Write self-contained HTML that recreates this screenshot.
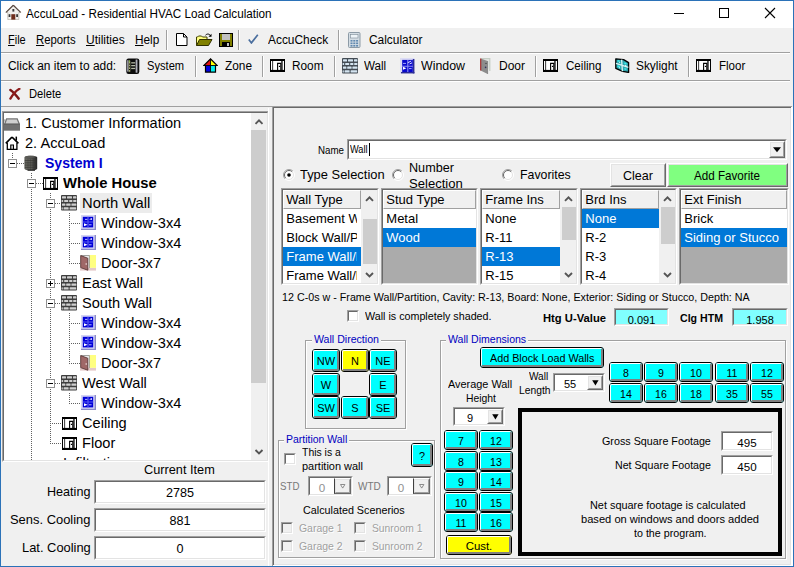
<!DOCTYPE html><html><head><meta charset="utf-8"><title>AccuLoad - Residential HVAC Load Calculation</title><style>
*{box-sizing:border-box;margin:0;padding:0}
html,body{width:794px;height:567px;overflow:hidden;background:#f0f0f0}
body{position:relative;font-family:"Liberation Sans",sans-serif;color:#000}
.a{position:absolute}
.t{position:absolute;white-space:nowrap;line-height:1}
.sep{position:absolute;width:2px;border-left:1px solid #a0a0a0;border-right:1px solid #fff}
.hl{position:absolute;height:2px;border-top:1px solid #a0a0a0;border-bottom:1px solid #fff}
.sunk{position:absolute;border:1px solid;border-color:#a0a0a0 #fff #fff #a0a0a0;background:#fff}
.sunk:before{content:"";position:absolute;left:0;top:0;right:0;bottom:0;border:1px solid;border-color:#696969 #e3e3e3 #e3e3e3 #696969}
.btn{position:absolute;border:1px solid;border-color:#fff #696969 #696969 #fff;background:#f0f0f0;text-align:center}
.btn:before{content:"";position:absolute;left:0;top:0;right:0;bottom:0;border:1px solid;border-color:#e3e3e3 #a0a0a0 #a0a0a0 #e3e3e3}
.cb{position:absolute;border:1px solid #000;border-radius:3px;background:#0ff;text-align:center;font-size:10.6px}
.cb:before{content:"";position:absolute;left:0;top:0;right:0;bottom:0;border-style:solid;border-width:1px 2px 2px 1px;border-color:#fff #808080 #808080 #fff;border-radius:2px}
.cb span{position:relative;z-index:2;display:inline-block}
.gb{position:absolute;border:1px solid #a0a0a0;box-shadow:1px 1px 0 #fff, inset 1px 1px 0 #fff}
.gt{position:absolute;white-space:nowrap;line-height:1;color:#0000c0;background:#f0f0f0}
.chk{position:absolute;width:12px;height:12px;background:#fff;border:1px solid;border-color:#a0a0a0 #fff #fff #a0a0a0}
.chk:before{content:"";position:absolute;left:0;top:0;right:0;bottom:0;border:1px solid;border-color:#696969 #e3e3e3 #e3e3e3 #696969}
.chk.dis{background:#f0f0f0}
.row{position:absolute;white-space:nowrap;line-height:1;font-size:13px}
.sel{background:#0078d7;color:#fff}
.sb{position:absolute;background:#f0f0f0}
.th{position:absolute;background:#cdcdcd}
</style></head><body>
<div class="a" style="left:0px;top:0px;width:794px;height:567px;background:#f0f0f0;border:1px solid #2b72b8"></div>
<div class="a" style="left:1px;top:1px;width:792px;height:27px;background:#fff"></div>
<svg class="a" style="left:5px;top:4px" width="17" height="16" viewBox="0 0 17 16"><path d="M8.3 1L0.8 8.5h2V15.6h11V8.5h2z" fill="#f2f0ec" stroke="#b4aca0" stroke-width="0.7"/><path d="M8.3 1.2L1 8.4M8.3 1.2L15.6 8.4" fill="none" stroke="#5a4a42" stroke-width="1.2"/><rect x="6.3" y="10.2" width="4" height="5.4" fill="#6e2c1a"/><rect x="3.6" y="10.2" width="1.8" height="2.8" fill="#3a3a3a"/><rect x="11.2" y="10.2" width="1.8" height="2.8" fill="#3a3a3a"/><rect x="7.4" y="5" width="1.9" height="2.6" fill="#3a3a3a"/></svg>
<div class="t" style="left:26.4px;top:8px;font-size:12px;transform:scaleX(0.9750);transform-origin:0 0;">AccuLoad - Residential HVAC Load Calculation</div>
<svg class="a" style="left:660px;top:1px" width="131" height="27" viewBox="0 0 131 27"><path d="M14 12.5h10" stroke="#000" stroke-width="1" fill="none"/><rect x="59.5" y="7.5" width="9" height="9" stroke="#000" stroke-width="1" fill="none"/><path d="M105 7l10 10M115 7l-10 10" stroke="#000" stroke-width="1.1" fill="none"/></svg>
<div class="t" style="left:8.3px;top:34px;font-size:12px;transform:scaleX(0.9154);transform-origin:0 0;"><u>F</u>ile</div>
<div class="t" style="left:36px;top:34px;font-size:12px;transform:scaleX(0.9425);transform-origin:0 0;"><u>R</u>eports</div>
<div class="t" style="left:86px;top:34px;font-size:12px;transform:scaleX(1.0007);transform-origin:0 0;"><u>U</u>tilities</div>
<div class="t" style="left:135.3px;top:34px;font-size:12px;transform:scaleX(0.9806);transform-origin:0 0;"><u>H</u>elp</div>
<div class="sep" style="left:166px;top:30px;height:20px"></div>
<div class="sep" style="left:238px;top:30px;height:20px"></div>
<div class="sep" style="left:338px;top:30px;height:20px"></div>
<svg class="a" style="left:176px;top:33px" width="12" height="13" viewBox="0 0 12 13"><path d="M0.5 0.5h7l3.5 3.5v8.5h-10.5z" fill="#fff" stroke="#000"/><path d="M7.5 0.5v3.5h3.5" fill="none" stroke="#000"/></svg>
<svg class="a" style="left:196px;top:33px" width="17" height="13" viewBox="0 0 17 13"><path d="M0.5 12.5v-8.5h1l1-1h3l1 1h4.5v2" fill="#ffff80" stroke="#404000"/><path d="M0.5 12.5l3-6h12.5l-3.5 6z" fill="#808000" stroke="#303000"/><path d="M9.5 2.2c1.5-1.6 3.8-1.6 5 0.6" fill="none" stroke="#000"/><path d="M15.5 0.8v3h-3z" fill="#000"/></svg>
<svg class="a" style="left:219px;top:33px" width="14" height="14" viewBox="0 0 14 14"><rect x="0.5" y="0.5" width="13" height="13" fill="#808000" stroke="#000"/><rect x="3" y="1" width="8" height="6" fill="#c0c0c0"/><rect x="3" y="9" width="8" height="4.5" fill="#000"/><rect x="8" y="10" width="2" height="3" fill="#c0c0c0"/></svg>
<svg class="a" style="left:248px;top:34px" width="11" height="10" viewBox="0 0 11 10"><path d="M0.8 5.5l2.6 3.4L9.8 0.8" fill="none" stroke="#4a6e9e" stroke-width="1.7"/></svg>
<svg class="a" style="left:348px;top:32px" width="13" height="16" viewBox="0 0 13 16"><rect x="0.5" y="0.5" width="11.5" height="15" rx="1" fill="#d4dde4" stroke="#8c9aa6"/><rect x="2.5" y="2.5" width="7.5" height="3.5" fill="#eef4f8" stroke="#7c8a96" stroke-width="0.6"/><g fill="#5f88b0"><rect x="2.5" y="8" width="2" height="1.6"/><rect x="5.3" y="8" width="2" height="1.6"/><rect x="8.1" y="8" width="2" height="1.6"/><rect x="2.5" y="10.5" width="2" height="1.6"/><rect x="5.3" y="10.5" width="2" height="1.6"/><rect x="8.1" y="10.5" width="2" height="1.6"/><rect x="2.5" y="13" width="2" height="1.6"/><rect x="5.3" y="13" width="2" height="1.6"/><rect x="8.1" y="13" width="2" height="1.6"/></g></svg>
<div class="t" style="left:268.2px;top:34px;font-size:12px;transform:scaleX(0.9919);transform-origin:0 0;">AccuCheck</div>
<div class="t" style="left:368.5px;top:34px;font-size:12px;transform:scaleX(0.9904);transform-origin:0 0;">Calculator</div>
<div class="hl" style="left:1px;top:52px;width:789px"></div>
<div class="t" style="left:8.4px;top:60px;font-size:12px;transform:scaleX(0.9944);transform-origin:0 0;">Click an item to add:</div>
<div class="t" style="left:147.4px;top:60px;font-size:12px;transform:scaleX(0.9273);transform-origin:0 0;">System</div>
<div class="t" style="left:225px;top:60px;font-size:12px;transform:scaleX(0.9872);transform-origin:0 0;">Zone</div>
<div class="t" style="left:292.4px;top:60px;font-size:12px;transform:scaleX(0.9841);transform-origin:0 0;">Room</div>
<div class="t" style="left:364.4px;top:60px;font-size:12px;transform:scaleX(0.9699);transform-origin:0 0;">Wall</div>
<div class="t" style="left:421px;top:60px;font-size:12px;transform:scaleX(1.0310);transform-origin:0 0;">Window</div>
<div class="t" style="left:499px;top:60px;font-size:12px;transform:scaleX(0.9997);transform-origin:0 0;">Door</div>
<div class="t" style="left:565.6px;top:60px;font-size:12px;transform:scaleX(0.9650);transform-origin:0 0;">Ceiling</div>
<div class="t" style="left:636px;top:60px;font-size:12px;transform:scaleX(0.9901);transform-origin:0 0;">Skylight</div>
<div class="t" style="left:718.7px;top:60px;font-size:12px;transform:scaleX(0.9620);transform-origin:0 0;">Floor</div>
<svg class="a" style="left:126px;top:58px" width="14" height="16" viewBox="0 0 14 16"><rect x="0.3" y="0.4" width="13" height="15.6" rx="2.2" fill="#0c0c0c"/><rect x="1" y="2.2" width="1.6" height="11.4" fill="#8c8c9c"/><rect x="2.6" y="2.6" width="1.7" height="11.2" fill="#a4aa74"/><rect x="2.9" y="2.4" width="1.1" height="1.4" fill="#7cb040"/><g fill="#101010"><rect x="3" y="5.6" width="1" height="1"/><rect x="3" y="8.3" width="1" height="1"/><rect x="3" y="11" width="1" height="1"/></g><g fill="#b4b8a4"><rect x="5.2" y="4.2" width="4" height="1.3"/><rect x="5.2" y="7" width="4" height="1.3"/><rect x="5.2" y="9.8" width="4" height="1.3"/></g><rect x="9.8" y="1.6" width="1.7" height="13" fill="#a0a0aa"/><rect x="9.8" y="1.6" width="0.6" height="13" fill="#c4c4cc"/></svg>
<svg class="a" style="left:203px;top:58px" width="15" height="15" viewBox="0 0 15 15"><path d="M7.5 0.8L0.8 7.5h6.7z" fill="#e01010"/><path d="M7.5 0.8L14.2 7.5h-6.7z" fill="#ffff00"/><rect x="2.5" y="7.5" width="5" height="6.5" fill="#0000e0"/><rect x="7.5" y="7.5" width="5" height="6.5" fill="#00f0f0"/><path d="M7.5 0.8L0.8 7.5h1.7v6.7h10v-6.7h1.7z" fill="none" stroke="#000" stroke-width="1.2"/><path d="M7.5 1v13M2.5 7.5h10" stroke="#000" stroke-width="0.9"/></svg>
<svg class="a" style="left:270px;top:59px" width="15" height="13" viewBox="0 0 15 13"><rect x="0" y="0" width="15" height="13" fill="#000"/><rect x="1" y="2" width="1.3" height="8.9" fill="#fff"/><rect x="3.1" y="2" width="8.2" height="8.9" fill="#fff"/><rect x="12.6" y="2" width="1.4" height="8.9" fill="#fff"/><path d="M7.6 10.9V4.4h3.2v6.5" fill="none" stroke="#000" stroke-width="1.1"/><path d="M8.9 6.8h1.3v1.2h-1.3z" fill="#000"/></svg>
<svg class="a" style="left:342px;top:58px" width="16" height="16" viewBox="0 0 16 16"><rect x="0" y="0" width="16" height="15.5" rx="1" fill="#444c54"/><rect x="1" y="1.2" width="4" height="2.2" rx="0.5" fill="#d4e4f0"/><rect x="6" y="1.2" width="5" height="2.2" rx="0.5" fill="#d4e4f0"/><rect x="12" y="1.2" width="3.4" height="2.2" rx="0.5" fill="#d4e4f0"/><rect x="0.6" y="4.9" width="1.6" height="2.2" rx="0.5" fill="#d4e4f0"/><rect x="3.2" y="4.9" width="4" height="2.2" rx="0.5" fill="#d4e4f0"/><rect x="8.2" y="4.9" width="3.2" height="2.2" rx="0.5" fill="#d4e4f0"/><rect x="12.2" y="4.9" width="3.2" height="2.2" rx="0.5" fill="#d4e4f0"/><rect x="1" y="8.6" width="3.4" height="2.2" rx="0.5" fill="#d4e4f0"/><rect x="5.2" y="8.6" width="4.4" height="2.2" rx="0.5" fill="#d4e4f0"/><rect x="10.4" y="8.6" width="5" height="2.2" rx="0.5" fill="#d4e4f0"/><rect x="0.6" y="12.2" width="1.2" height="2.2" rx="0.5" fill="#d4e4f0"/><rect x="2.6" y="12.2" width="5" height="2.2" rx="0.5" fill="#d4e4f0"/><rect x="8.6" y="12.2" width="6.6" height="2.2" rx="0.5" fill="#d4e4f0"/></svg>
<svg class="a" style="left:399.6px;top:58.3px" width="15" height="16" viewBox="0 0 15 16"><rect x="0" y="0" width="14.4" height="15.4" fill="#dcdcf4"/><rect x="12.8" y="1" width="1.6" height="14.4" fill="#2c2c94"/><rect x="1" y="14" width="13.4" height="1.4" fill="#2c2c94"/><rect x="2.2" y="1.9" width="10.6" height="12.1" fill="#0808cc"/><path d="M7.8 2v12M2.2 8.2h10.6" stroke="#8c8cf4" stroke-width="1.1"/><path d="M3 8.8l3.4 1.5l-3.4 1.5z" fill="#fff"/><path d="M11.2 3l-3.4 1.7M12 4.8l-2.4 1.2" stroke="#e0e0ff" stroke-width="1"/><path d="M3 5.4h3M9 10.6h2.6" stroke="#b8b8ff" stroke-width="0.9"/></svg>
<svg class="a" style="left:480px;top:58px" width="11" height="16" viewBox="0 0 11 16"><path d="M1.2 0.6h8.6v12.4" fill="#e4e8e4" stroke="#c4ccc4" stroke-width="1.2"/><path d="M0.6 0.6L7.6 3v13L0.6 12.6z" fill="#8c8c8c"/><path d="M7.6 3v13" stroke="#7c7c7c" stroke-width="0.8"/><path d="M0.7 0.6v12" stroke="#a82c2c" stroke-width="1.2"/><circle cx="5.6" cy="9.4" r="0.8" fill="#30305c"/><circle cx="6" cy="5.4" r="0.7" fill="#404040"/></svg>
<svg class="a" style="left:543px;top:59px" width="15" height="13" viewBox="0 0 15 13"><rect x="0" y="0" width="15" height="13" fill="#000"/><rect x="1" y="2" width="1.3" height="8.9" fill="#fff"/><rect x="3.1" y="2" width="8.2" height="8.9" fill="#fff"/><rect x="12.6" y="2" width="1.4" height="8.9" fill="#fff"/><path d="M7.6 10.9V4.4h3.2v6.5" fill="none" stroke="#000" stroke-width="1.1"/><path d="M8.9 6.8h1.3v1.2h-1.3z" fill="#000"/></svg>
<svg class="a" style="left:615px;top:58px" width="15" height="15" viewBox="0 0 15 15"><path d="M0.8 0.8L8.6 1.6L13.6 4.6V14.4L7.6 13.4L0.8 10.4z" fill="#2ea4ac" stroke="#000" stroke-width="1.3" stroke-linejoin="round"/><path d="M6.6 1.6L7.4 13.2M1 5.4L13.4 9.4" stroke="#d8f4f4" stroke-width="1.3"/><path d="M2.6 2.8l2 .5M9.4 5l2 1M2.6 8l2.2 1M9.4 10.6l2 .8" stroke="#40f0f0" stroke-width="1.4"/><path d="M4 4.2l1.2 .4M10 7.4l1.6 .6M4 9.6l1 .4" stroke="#e8ffff" stroke-width="0.9"/></svg>
<svg class="a" style="left:696px;top:59px" width="15" height="13" viewBox="0 0 15 13"><rect x="0" y="0" width="15" height="13" fill="#000"/><rect x="1" y="2" width="1.3" height="8.9" fill="#fff"/><rect x="3.1" y="2" width="8.2" height="8.9" fill="#fff"/><rect x="12.6" y="2" width="1.4" height="8.9" fill="#fff"/><path d="M7.6 10.9V4.4h3.2v6.5" fill="none" stroke="#000" stroke-width="1.1"/><path d="M8.9 6.8h1.3v1.2h-1.3z" fill="#000"/></svg>
<div class="sep" style="left:195px;top:56px;height:21px"></div>
<div class="sep" style="left:262px;top:56px;height:21px"></div>
<div class="sep" style="left:334px;top:56px;height:21px"></div>
<div class="sep" style="left:535px;top:56px;height:21px"></div>
<div class="sep" style="left:688px;top:56px;height:21px"></div>
<div class="hl" style="left:1px;top:80px;width:789px"></div>
<svg class="a" style="left:9px;top:88px" width="12" height="12" viewBox="0 0 12 12"><path d="M1.4 2c2.4 1.6 5.2 4.6 8.2 8.6" fill="none" stroke="#7a1616" stroke-width="2.5" stroke-linecap="round"/><path d="M10.4 0.8c-3.4 2-6.4 5.4-9 9.8" fill="none" stroke="#8e1c1c" stroke-width="2.3" stroke-linecap="round"/></svg>
<div class="t" style="left:28.7px;top:87.5px;font-size:12px;transform:scaleX(0.9312);transform-origin:0 0;">Delete</div>
<div class="a" style="left:1px;top:106px;width:271px;height:1px;background:#a0a0a0"></div>
<div class="a" style="left:272px;top:106px;width:520px;height:1px;background:#a0a0a0"></div>
<div class="a" style="left:273px;top:107px;width:518px;height:1px;background:#696969"></div>
<div class="sunk" style="left:2px;top:111px;width:267px;height:351px;"></div>
<div class="a" style="left:4px;top:113px;width:247px;height:347px;overflow:hidden;background:#fff">
<div class="a" style="left:8px;top:40px;width:1px;height:10px;background:repeating-linear-gradient(to bottom,#606060 0,#606060 1px,transparent 1px,transparent 2px)"></div>
<div class="a" style="left:13px;top:50px;width:7px;height:1px;background:repeating-linear-gradient(to right,#606060 0,#606060 1px,transparent 1px,transparent 2px)"></div>
<div class="a" style="left:27px;top:60px;width:1px;height:287px;background:repeating-linear-gradient(to bottom,#606060 0,#606060 1px,transparent 1px,transparent 2px)"></div>
<div class="a" style="left:32px;top:70px;width:7px;height:1px;background:repeating-linear-gradient(to right,#606060 0,#606060 1px,transparent 1px,transparent 2px)"></div>
<div class="a" style="left:46px;top:80px;width:1px;height:251px;background:repeating-linear-gradient(to bottom,#606060 0,#606060 1px,transparent 1px,transparent 2px)"></div>
<div class="a" style="left:51px;top:90px;width:7px;height:1px;background:repeating-linear-gradient(to right,#606060 0,#606060 1px,transparent 1px,transparent 2px)"></div>
<div class="a" style="left:51px;top:170px;width:7px;height:1px;background:repeating-linear-gradient(to right,#606060 0,#606060 1px,transparent 1px,transparent 2px)"></div>
<div class="a" style="left:51px;top:190px;width:7px;height:1px;background:repeating-linear-gradient(to right,#606060 0,#606060 1px,transparent 1px,transparent 2px)"></div>
<div class="a" style="left:51px;top:270px;width:7px;height:1px;background:repeating-linear-gradient(to right,#606060 0,#606060 1px,transparent 1px,transparent 2px)"></div>
<div class="a" style="left:46px;top:310px;width:12px;height:1px;background:repeating-linear-gradient(to right,#606060 0,#606060 1px,transparent 1px,transparent 2px)"></div>
<div class="a" style="left:46px;top:330px;width:12px;height:1px;background:repeating-linear-gradient(to right,#606060 0,#606060 1px,transparent 1px,transparent 2px)"></div>
<div class="a" style="left:65px;top:100px;width:1px;height:51px;background:repeating-linear-gradient(to bottom,#606060 0,#606060 1px,transparent 1px,transparent 2px)"></div>
<div class="a" style="left:65px;top:200px;width:1px;height:51px;background:repeating-linear-gradient(to bottom,#606060 0,#606060 1px,transparent 1px,transparent 2px)"></div>
<div class="a" style="left:65px;top:280px;width:1px;height:11px;background:repeating-linear-gradient(to bottom,#606060 0,#606060 1px,transparent 1px,transparent 2px)"></div>
<div class="a" style="left:65px;top:110px;width:11px;height:1px;background:repeating-linear-gradient(to right,#606060 0,#606060 1px,transparent 1px,transparent 2px)"></div>
<div class="a" style="left:65px;top:130px;width:11px;height:1px;background:repeating-linear-gradient(to right,#606060 0,#606060 1px,transparent 1px,transparent 2px)"></div>
<div class="a" style="left:65px;top:150px;width:11px;height:1px;background:repeating-linear-gradient(to right,#606060 0,#606060 1px,transparent 1px,transparent 2px)"></div>
<div class="a" style="left:65px;top:210px;width:11px;height:1px;background:repeating-linear-gradient(to right,#606060 0,#606060 1px,transparent 1px,transparent 2px)"></div>
<div class="a" style="left:65px;top:230px;width:11px;height:1px;background:repeating-linear-gradient(to right,#606060 0,#606060 1px,transparent 1px,transparent 2px)"></div>
<div class="a" style="left:65px;top:250px;width:11px;height:1px;background:repeating-linear-gradient(to right,#606060 0,#606060 1px,transparent 1px,transparent 2px)"></div>
<div class="a" style="left:65px;top:290px;width:11px;height:1px;background:repeating-linear-gradient(to right,#606060 0,#606060 1px,transparent 1px,transparent 2px)"></div>
<div class="a" style="left:27px;top:350px;width:12px;height:1px;background:repeating-linear-gradient(to right,#606060 0,#606060 1px,transparent 1px,transparent 2px)"></div>
<div class="a" style="left:4px;top:46px;width:9px;height:9px;border:1px solid #919191;background:#fff"><div class="a" style="left:1px;top:3px;width:5px;height:1px;background:#000"></div></div>
<div class="a" style="left:23px;top:66px;width:9px;height:9px;border:1px solid #919191;background:#fff"><div class="a" style="left:1px;top:3px;width:5px;height:1px;background:#000"></div></div>
<div class="a" style="left:42px;top:86px;width:9px;height:9px;border:1px solid #919191;background:#fff"><div class="a" style="left:1px;top:3px;width:5px;height:1px;background:#000"></div></div>
<div class="a" style="left:42px;top:166px;width:9px;height:9px;border:1px solid #919191;background:#fff"><div class="a" style="left:1px;top:3px;width:5px;height:1px;background:#000"></div><div class="a" style="left:3px;top:1px;width:1px;height:5px;background:#000"></div></div>
<div class="a" style="left:42px;top:186px;width:9px;height:9px;border:1px solid #919191;background:#fff"><div class="a" style="left:1px;top:3px;width:5px;height:1px;background:#000"></div></div>
<div class="a" style="left:42px;top:266px;width:9px;height:9px;border:1px solid #919191;background:#fff"><div class="a" style="left:1px;top:3px;width:5px;height:1px;background:#000"></div></div>
<svg class="a" style="left:0px;top:5px" width="16" height="13" viewBox="0 0 16 13"><path d="M2.2 0.3h11.4L16 6v6.4H0V6z" fill="#747474"/><path d="M3 1.4h9.8l1.6 4H1.6z" fill="#cfcfcf"/><path d="M0.4 1.2l1 .2L0.6 4.6z" fill="#747474"/><rect x="0" y="6" width="16" height="6.4" fill="#707070"/><path d="M0 6.2h16" stroke="#5c5c5c" stroke-width="0.8"/></svg>
<svg class="a" style="left:1px;top:23px" width="14" height="14" viewBox="0 0 14 14"><path d="M7 1.2L0.8 7.4M7 1.2L13.4 7.4" fill="none" stroke="#000" stroke-width="1.7"/><path d="M2.3 7v6.3h9.6V7" fill="#fff" stroke="#000" stroke-width="1.3"/><path d="M7 2.6L2.9 6.8h8.2z" fill="#fff"/><path d="M5.8 13.2V9h2.6v4.2" fill="none" stroke="#000" stroke-width="1.2"/><path d="M11.3 0.6v4" stroke="#000" stroke-width="1.5"/></svg>
<svg class="a" style="left:20px;top:42px" width="14" height="17" viewBox="0 0 14 17"><defs><linearGradient id="acg" x1="0" x2="1" y1="0" y2="0"><stop offset="0" stop-color="#62625c"/><stop offset="0.55" stop-color="#4c4c48"/><stop offset="0.8" stop-color="#3a3a38"/><stop offset="1" stop-color="#262626"/></linearGradient></defs><path d="M0.4 2.4c0-2.2 12.8-2.2 12.8 0v11c0 2.6-12.8 2.6-12.8 0z" fill="url(#acg)"/><ellipse cx="6.2" cy="1.8" rx="5" ry="1.1" fill="#5a5a56"/><g stroke="#6c6c64" stroke-width="0.7"><path d="M2.6 3.6v10.6M5.2 3.8v11M7.8 3.8v11"/></g><g stroke="#34342f" stroke-width="0.6"><path d="M0.8 5.5h11M0.8 7.8h11M0.8 10.1h11M0.8 12.4h11"/></g><path d="M3.6 15.2h7.4" stroke="#101010" stroke-width="1"/></svg>
<svg class="a" style="left:39px;top:64px" width="15" height="13" viewBox="0 0 15 13"><rect x="0" y="0" width="15" height="13" fill="#000"/><rect x="1" y="2" width="1.3" height="8.9" fill="#fff"/><rect x="3.1" y="2" width="8.2" height="8.9" fill="#fff"/><rect x="12.6" y="2" width="1.4" height="8.9" fill="#fff"/><path d="M7.6 10.9V4.4h3.2v6.5" fill="none" stroke="#000" stroke-width="1.1"/><path d="M8.9 6.8h1.3v1.2h-1.3z" fill="#000"/></svg>
<svg class="a" style="left:57px;top:82px" width="16" height="16" viewBox="0 0 16 16"><rect x="0" y="0" width="16" height="15.5" rx="1" fill="#3e3e3e"/><rect x="1" y="1.2" width="4" height="2.2" rx="0.5" fill="#cfcfcf"/><rect x="6" y="1.2" width="5" height="2.2" rx="0.5" fill="#cfcfcf"/><rect x="12" y="1.2" width="3.4" height="2.2" rx="0.5" fill="#cfcfcf"/><rect x="0.6" y="4.9" width="1.6" height="2.2" rx="0.5" fill="#cfcfcf"/><rect x="3.2" y="4.9" width="4" height="2.2" rx="0.5" fill="#cfcfcf"/><rect x="8.2" y="4.9" width="3.2" height="2.2" rx="0.5" fill="#cfcfcf"/><rect x="12.2" y="4.9" width="3.2" height="2.2" rx="0.5" fill="#cfcfcf"/><rect x="1" y="8.6" width="3.4" height="2.2" rx="0.5" fill="#cfcfcf"/><rect x="5.2" y="8.6" width="4.4" height="2.2" rx="0.5" fill="#cfcfcf"/><rect x="10.4" y="8.6" width="5" height="2.2" rx="0.5" fill="#cfcfcf"/><rect x="0.6" y="12.2" width="1.2" height="2.2" rx="0.5" fill="#cfcfcf"/><rect x="2.6" y="12.2" width="5" height="2.2" rx="0.5" fill="#cfcfcf"/><rect x="8.6" y="12.2" width="6.6" height="2.2" rx="0.5" fill="#cfcfcf"/></svg>
<svg class="a" style="left:57px;top:162px" width="16" height="16" viewBox="0 0 16 16"><rect x="0" y="0" width="16" height="15.5" rx="1" fill="#3e3e3e"/><rect x="1" y="1.2" width="4" height="2.2" rx="0.5" fill="#cfcfcf"/><rect x="6" y="1.2" width="5" height="2.2" rx="0.5" fill="#cfcfcf"/><rect x="12" y="1.2" width="3.4" height="2.2" rx="0.5" fill="#cfcfcf"/><rect x="0.6" y="4.9" width="1.6" height="2.2" rx="0.5" fill="#cfcfcf"/><rect x="3.2" y="4.9" width="4" height="2.2" rx="0.5" fill="#cfcfcf"/><rect x="8.2" y="4.9" width="3.2" height="2.2" rx="0.5" fill="#cfcfcf"/><rect x="12.2" y="4.9" width="3.2" height="2.2" rx="0.5" fill="#cfcfcf"/><rect x="1" y="8.6" width="3.4" height="2.2" rx="0.5" fill="#cfcfcf"/><rect x="5.2" y="8.6" width="4.4" height="2.2" rx="0.5" fill="#cfcfcf"/><rect x="10.4" y="8.6" width="5" height="2.2" rx="0.5" fill="#cfcfcf"/><rect x="0.6" y="12.2" width="1.2" height="2.2" rx="0.5" fill="#cfcfcf"/><rect x="2.6" y="12.2" width="5" height="2.2" rx="0.5" fill="#cfcfcf"/><rect x="8.6" y="12.2" width="6.6" height="2.2" rx="0.5" fill="#cfcfcf"/></svg>
<svg class="a" style="left:57px;top:182px" width="16" height="16" viewBox="0 0 16 16"><rect x="0" y="0" width="16" height="15.5" rx="1" fill="#3e3e3e"/><rect x="1" y="1.2" width="4" height="2.2" rx="0.5" fill="#cfcfcf"/><rect x="6" y="1.2" width="5" height="2.2" rx="0.5" fill="#cfcfcf"/><rect x="12" y="1.2" width="3.4" height="2.2" rx="0.5" fill="#cfcfcf"/><rect x="0.6" y="4.9" width="1.6" height="2.2" rx="0.5" fill="#cfcfcf"/><rect x="3.2" y="4.9" width="4" height="2.2" rx="0.5" fill="#cfcfcf"/><rect x="8.2" y="4.9" width="3.2" height="2.2" rx="0.5" fill="#cfcfcf"/><rect x="12.2" y="4.9" width="3.2" height="2.2" rx="0.5" fill="#cfcfcf"/><rect x="1" y="8.6" width="3.4" height="2.2" rx="0.5" fill="#cfcfcf"/><rect x="5.2" y="8.6" width="4.4" height="2.2" rx="0.5" fill="#cfcfcf"/><rect x="10.4" y="8.6" width="5" height="2.2" rx="0.5" fill="#cfcfcf"/><rect x="0.6" y="12.2" width="1.2" height="2.2" rx="0.5" fill="#cfcfcf"/><rect x="2.6" y="12.2" width="5" height="2.2" rx="0.5" fill="#cfcfcf"/><rect x="8.6" y="12.2" width="6.6" height="2.2" rx="0.5" fill="#cfcfcf"/></svg>
<svg class="a" style="left:57px;top:262px" width="16" height="16" viewBox="0 0 16 16"><rect x="0" y="0" width="16" height="15.5" rx="1" fill="#3e3e3e"/><rect x="1" y="1.2" width="4" height="2.2" rx="0.5" fill="#cfcfcf"/><rect x="6" y="1.2" width="5" height="2.2" rx="0.5" fill="#cfcfcf"/><rect x="12" y="1.2" width="3.4" height="2.2" rx="0.5" fill="#cfcfcf"/><rect x="0.6" y="4.9" width="1.6" height="2.2" rx="0.5" fill="#cfcfcf"/><rect x="3.2" y="4.9" width="4" height="2.2" rx="0.5" fill="#cfcfcf"/><rect x="8.2" y="4.9" width="3.2" height="2.2" rx="0.5" fill="#cfcfcf"/><rect x="12.2" y="4.9" width="3.2" height="2.2" rx="0.5" fill="#cfcfcf"/><rect x="1" y="8.6" width="3.4" height="2.2" rx="0.5" fill="#cfcfcf"/><rect x="5.2" y="8.6" width="4.4" height="2.2" rx="0.5" fill="#cfcfcf"/><rect x="10.4" y="8.6" width="5" height="2.2" rx="0.5" fill="#cfcfcf"/><rect x="0.6" y="12.2" width="1.2" height="2.2" rx="0.5" fill="#cfcfcf"/><rect x="2.6" y="12.2" width="5" height="2.2" rx="0.5" fill="#cfcfcf"/><rect x="8.6" y="12.2" width="6.6" height="2.2" rx="0.5" fill="#cfcfcf"/></svg>
<svg class="a" style="left:77px;top:102px" width="15" height="15" viewBox="0 0 15 15"><rect x="0" y="0" width="15" height="15" fill="#8a8ac8"/><rect x="0" y="0" width="13.6" height="13.8" fill="#d4d4f4"/><rect x="1.8" y="1.8" width="10.4" height="10.6" fill="#0000d8"/><path d="M7 1.8v10.6M1.8 7h10.4" stroke="#5858f0" stroke-width="1.2"/><path d="M3 8.2l3.6 1.6L3 11.2z" fill="#fff"/><path d="M11 3l-3 1.2L11 5z" fill="#dcdcff"/><path d="M4 4.4h2.4M8 9.8h2.6" stroke="#c8c8ff" stroke-width="0.9"/></svg>
<svg class="a" style="left:77px;top:122px" width="15" height="15" viewBox="0 0 15 15"><rect x="0" y="0" width="15" height="15" fill="#8a8ac8"/><rect x="0" y="0" width="13.6" height="13.8" fill="#d4d4f4"/><rect x="1.8" y="1.8" width="10.4" height="10.6" fill="#0000d8"/><path d="M7 1.8v10.6M1.8 7h10.4" stroke="#5858f0" stroke-width="1.2"/><path d="M3 8.2l3.6 1.6L3 11.2z" fill="#fff"/><path d="M11 3l-3 1.2L11 5z" fill="#dcdcff"/><path d="M4 4.4h2.4M8 9.8h2.6" stroke="#c8c8ff" stroke-width="0.9"/></svg>
<svg class="a" style="left:77px;top:202px" width="15" height="15" viewBox="0 0 15 15"><rect x="0" y="0" width="15" height="15" fill="#8a8ac8"/><rect x="0" y="0" width="13.6" height="13.8" fill="#d4d4f4"/><rect x="1.8" y="1.8" width="10.4" height="10.6" fill="#0000d8"/><path d="M7 1.8v10.6M1.8 7h10.4" stroke="#5858f0" stroke-width="1.2"/><path d="M3 8.2l3.6 1.6L3 11.2z" fill="#fff"/><path d="M11 3l-3 1.2L11 5z" fill="#dcdcff"/><path d="M4 4.4h2.4M8 9.8h2.6" stroke="#c8c8ff" stroke-width="0.9"/></svg>
<svg class="a" style="left:77px;top:222px" width="15" height="15" viewBox="0 0 15 15"><rect x="0" y="0" width="15" height="15" fill="#8a8ac8"/><rect x="0" y="0" width="13.6" height="13.8" fill="#d4d4f4"/><rect x="1.8" y="1.8" width="10.4" height="10.6" fill="#0000d8"/><path d="M7 1.8v10.6M1.8 7h10.4" stroke="#5858f0" stroke-width="1.2"/><path d="M3 8.2l3.6 1.6L3 11.2z" fill="#fff"/><path d="M11 3l-3 1.2L11 5z" fill="#dcdcff"/><path d="M4 4.4h2.4M8 9.8h2.6" stroke="#c8c8ff" stroke-width="0.9"/></svg>
<svg class="a" style="left:77px;top:282px" width="15" height="15" viewBox="0 0 15 15"><rect x="0" y="0" width="15" height="15" fill="#8a8ac8"/><rect x="0" y="0" width="13.6" height="13.8" fill="#d4d4f4"/><rect x="1.8" y="1.8" width="10.4" height="10.6" fill="#0000d8"/><path d="M7 1.8v10.6M1.8 7h10.4" stroke="#5858f0" stroke-width="1.2"/><path d="M3 8.2l3.6 1.6L3 11.2z" fill="#fff"/><path d="M11 3l-3 1.2L11 5z" fill="#dcdcff"/><path d="M4 4.4h2.4M8 9.8h2.6" stroke="#c8c8ff" stroke-width="0.9"/></svg>
<svg class="a" style="left:76px;top:142px" width="16" height="16" viewBox="0 0 16 16"><rect x="0" y="12.6" width="16" height="3" fill="#e4c8c8"/><rect x="9" y="0" width="7" height="12.8" fill="#ffff80"/><path d="M0.8 0.5h8.6v12.5" fill="#ececec" stroke="#8c8c8c" stroke-width="0.8"/><path d="M0.7 0.6L7.8 3.2v12L0.7 12.6z" fill="#a06868" stroke="#5a3838" stroke-width="0.9"/><circle cx="6.2" cy="9" r="0.8" fill="#f0e0e0"/></svg>
<svg class="a" style="left:76px;top:242px" width="16" height="16" viewBox="0 0 16 16"><rect x="0" y="12.6" width="16" height="3" fill="#e4c8c8"/><rect x="9" y="0" width="7" height="12.8" fill="#ffff80"/><path d="M0.8 0.5h8.6v12.5" fill="#ececec" stroke="#8c8c8c" stroke-width="0.8"/><path d="M0.7 0.6L7.8 3.2v12L0.7 12.6z" fill="#a06868" stroke="#5a3838" stroke-width="0.9"/><circle cx="6.2" cy="9" r="0.8" fill="#f0e0e0"/></svg>
<svg class="a" style="left:58px;top:304px" width="15" height="13" viewBox="0 0 15 13"><rect x="0" y="0" width="15" height="13" fill="#000"/><rect x="1" y="2" width="1.3" height="8.9" fill="#fff"/><rect x="3.1" y="2" width="8.2" height="8.9" fill="#fff"/><rect x="12.6" y="2" width="1.4" height="8.9" fill="#fff"/><path d="M7.6 10.9V4.4h3.2v6.5" fill="none" stroke="#000" stroke-width="1.1"/><path d="M8.9 6.8h1.3v1.2h-1.3z" fill="#000"/></svg>
<svg class="a" style="left:58px;top:324px" width="15" height="13" viewBox="0 0 15 13"><rect x="0" y="0" width="15" height="13" fill="#000"/><rect x="1" y="2" width="1.3" height="8.9" fill="#fff"/><rect x="3.1" y="2" width="8.2" height="8.9" fill="#fff"/><rect x="12.6" y="2" width="1.4" height="8.9" fill="#fff"/><path d="M7.6 10.9V4.4h3.2v6.5" fill="none" stroke="#000" stroke-width="1.1"/><path d="M8.9 6.8h1.3v1.2h-1.3z" fill="#000"/></svg>
<div class="t" style="left:21.4px;top:2px;font-size:14.6px;line-height:16px;transform:scaleX(0.9975);transform-origin:0 0;">1. Customer Information</div>
<div class="t" style="left:21px;top:22px;font-size:14.6px;line-height:16px;transform:scaleX(0.9993);transform-origin:0 0;">2. AccuLoad</div>
<div class="t" style="left:41px;top:42px;font-size:14.6px;line-height:16px;color:#0000d0;transform:scaleX(0.9625);transform-origin:0 0;font-weight:bold;">System I</div>
<div class="t" style="left:59px;top:62px;font-size:14.6px;line-height:16px;transform:scaleX(1.0134);transform-origin:0 0;font-weight:bold;">Whole House</div>
<div class="a" style="left:76px;top:80px;width:72px;height:20px;background:#ececec"></div>
<div class="t" style="left:78px;top:82px;font-size:14.6px;line-height:16px;transform:scaleX(1.0118);transform-origin:0 0;">North Wall</div>
<div class="t" style="left:97px;top:102px;font-size:14.6px;line-height:16px;">Window-3x4</div>
<div class="t" style="left:97px;top:122px;font-size:14.6px;line-height:16px;">Window-3x4</div>
<div class="t" style="left:97px;top:142px;font-size:14.6px;line-height:16px;">Door-3x7</div>
<div class="t" style="left:78px;top:162px;font-size:14.6px;line-height:16px;">East Wall</div>
<div class="t" style="left:78px;top:182px;font-size:14.6px;line-height:16px;">South Wall</div>
<div class="t" style="left:97px;top:202px;font-size:14.6px;line-height:16px;">Window-3x4</div>
<div class="t" style="left:97px;top:222px;font-size:14.6px;line-height:16px;">Window-3x4</div>
<div class="t" style="left:97px;top:242px;font-size:14.6px;line-height:16px;">Door-3x7</div>
<div class="t" style="left:78px;top:262px;font-size:14.6px;line-height:16px;">West Wall</div>
<div class="t" style="left:97px;top:282px;font-size:14.6px;line-height:16px;">Window-3x4</div>
<div class="t" style="left:78px;top:302px;font-size:14.6px;line-height:16px;">Ceiling</div>
<div class="t" style="left:78px;top:322px;font-size:14.6px;line-height:16px;">Floor</div>
<div class="t" style="left:59px;top:342px;font-size:14.6px;line-height:16px;">Infiltration</div>
</div>
<div class="sb" style="left:251px;top:113px;width:16px;height:347px;"></div>
<div class="th" style="left:251px;top:130px;width:15px;height:253px;"></div>
<svg class="a" style="left:251px;top:113px" width="16" height="347"><path d="M4.5 10.8l3.5-3.5l3.5 3.5M4.5 337l3.5 3.5l3.5-3.5" stroke="#555" stroke-width="1.9" fill="none"/></svg>
<div class="t" style="left:144.2px;top:463.5px;font-size:12.8px;transform:scaleX(0.9954);transform-origin:0 0;">Current Item</div>
<div class="t" style="left:47.4px;top:486px;font-size:12.8px;transform:scaleX(0.9838);transform-origin:0 0;">Heating</div>
<div class="sunk" style="left:94px;top:480px;width:172px;height:24px;"></div>
<div class="t" style="left:10.3px;top:514px;font-size:12.8px;transform:scaleX(1.0102);transform-origin:0 0;">Sens. Cooling</div>
<div class="sunk" style="left:94px;top:508px;width:172px;height:24px;"></div>
<div class="t" style="left:22px;top:542px;font-size:12.8px;transform:scaleX(1.0072);transform-origin:0 0;">Lat. Cooling</div>
<div class="sunk" style="left:94px;top:536px;width:172px;height:24px;"></div>
<div class="t" style="left:94px;top:486.5px;font-size:12.6px;width:172px;text-align:center;">2785</div>
<div class="t" style="left:94px;top:514.5px;font-size:12.6px;width:172px;text-align:center;">881</div>
<div class="t" style="left:94px;top:542.5px;font-size:12.6px;width:172px;text-align:center;">0</div>
<div class="a" style="left:268px;top:108px;width:1px;height:458px;background:#fff"></div>
<div class="a" style="left:272px;top:107px;width:1px;height:459px;background:#a0a0a0"></div>
<div class="a" style="left:273px;top:107px;width:1px;height:458px;background:#696969"></div>
<div class="a" style="left:790px;top:108px;width:1px;height:457px;background:#e3e3e3"></div>
<div class="a" style="left:791px;top:107px;width:2px;height:459px;background:#fff"></div>
<div class="a" style="left:274px;top:564px;width:517px;height:1px;background:#e3e3e3"></div>
<div class="a" style="left:273px;top:565px;width:520px;height:1px;background:#fff"></div>
<div class="t" style="left:317.8px;top:144.5px;font-size:11.1px;transform:scaleX(0.8782);transform-origin:0 0;">Name</div>
<div class="sunk" style="left:347px;top:139px;width:440px;height:21px;"></div>
<div class="t" style="left:350.4px;top:145px;font-size:10.2px;transform:scaleX(0.9047);transform-origin:0 0;">Wall</div>
<div class="a" style="left:369px;top:143px;width:1px;height:13px;background:#000"></div>
<div class="btn" style="left:769px;top:141px;width:16px;height:17px;"></div>
<svg class="a" style="left:769px;top:141px" width="16" height="17"><path d="M4 6.3h8l-4 5z" fill="#000"/></svg>
<svg class="a" style="left:283px;top:169px" width="12" height="12" viewBox="0 0 12 12"><circle cx="6" cy="6" r="5.3" fill="#fff"/><path d="M2.1 9.9A5.5 5.5 0 0 1 9.9 2.1" stroke="#a0a0a0" stroke-width="1" fill="none"/><path d="M2.8 9.2A4.5 4.5 0 0 1 9.2 2.8" stroke="#696969" stroke-width="1" fill="none"/><path d="M9.9 2.1A5.5 5.5 0 0 1 2.1 9.9" stroke="#fff" stroke-width="1" fill="none"/><path d="M9.2 2.8A4.5 4.5 0 0 1 2.8 9.2" stroke="#e3e3e3" stroke-width="1" fill="none"/><circle cx="6" cy="6" r="1.8" fill="#000"/></svg>
<div class="t" style="left:299.7px;top:168px;font-size:13px;transform:scaleX(0.9921);transform-origin:0 0;">Type Selection</div>
<svg class="a" style="left:392px;top:169px" width="12" height="12" viewBox="0 0 12 12"><circle cx="6" cy="6" r="5.3" fill="#fff"/><path d="M2.1 9.9A5.5 5.5 0 0 1 9.9 2.1" stroke="#a0a0a0" stroke-width="1" fill="none"/><path d="M2.8 9.2A4.5 4.5 0 0 1 9.2 2.8" stroke="#696969" stroke-width="1" fill="none"/><path d="M9.9 2.1A5.5 5.5 0 0 1 2.1 9.9" stroke="#fff" stroke-width="1" fill="none"/><path d="M9.2 2.8A4.5 4.5 0 0 1 2.8 9.2" stroke="#e3e3e3" stroke-width="1" fill="none"/></svg>
<div class="t" style="left:408.5px;top:160.5px;font-size:13px;transform:scaleX(0.9712);transform-origin:0 0;">Number</div>
<div class="t" style="left:408.5px;top:176.8px;font-size:13px;transform:scaleX(1.0060);transform-origin:0 0;">Selection</div>
<svg class="a" style="left:502px;top:169px" width="12" height="12" viewBox="0 0 12 12"><circle cx="6" cy="6" r="5.3" fill="#fff"/><path d="M2.1 9.9A5.5 5.5 0 0 1 9.9 2.1" stroke="#a0a0a0" stroke-width="1" fill="none"/><path d="M2.8 9.2A4.5 4.5 0 0 1 9.2 2.8" stroke="#696969" stroke-width="1" fill="none"/><path d="M9.9 2.1A5.5 5.5 0 0 1 2.1 9.9" stroke="#fff" stroke-width="1" fill="none"/><path d="M9.2 2.8A4.5 4.5 0 0 1 2.8 9.2" stroke="#e3e3e3" stroke-width="1" fill="none"/></svg>
<div class="t" style="left:519.6px;top:168px;font-size:13px;transform:scaleX(0.9484);transform-origin:0 0;">Favorites</div>
<div class="btn" style="left:610px;top:163px;width:56px;height:24px;"></div>
<div class="t" style="left:623px;top:168.5px;font-size:13px;transform:scaleX(0.9658);transform-origin:0 0;">Clear</div>
<div class="btn" style="left:667px;top:163px;width:121px;height:24px;background:#80ff80"></div>
<div class="t" style="left:694px;top:168.5px;font-size:13px;transform:scaleX(0.8955);transform-origin:0 0;">Add Favorite</div>
<div class="sunk" style="left:281px;top:188px;width:98px;height:97px;background:#fff"></div>
<div class="a" style="left:283px;top:190px;width:78px;height:93px;overflow:hidden">
<div class="a" style="left:0;top:0;width:78px;height:19px;background:#f0f0f0;border:1px solid;border-color:#fff #a0a0a0 #a0a0a0 #fff"></div>
<div class="row" style="left:3.3px;top:3px">Wall Type</div>
<div class="a" style="left:0;top:19px;width:78px;height:19px;background:#fff;"></div>
<div class="row" style="left:3.3px;top:22px;width:71px;overflow:hidden;">Basement Wall</div>
<div class="a" style="left:0;top:38px;width:78px;height:19px;background:#fff;"></div>
<div class="row" style="left:3.3px;top:41px;width:71px;overflow:hidden;">Block Wall/Partition</div>
<div class="a sel" style="left:0;top:57px;width:78px;height:19px;"></div>
<div class="row" style="left:3.3px;top:60px;width:71px;overflow:hidden;color:#fff">Frame Wall/Partition</div>
<div class="a" style="left:0;top:76px;width:78px;height:19px;background:#fff;"></div>
<div class="row" style="left:3.3px;top:79px;width:71px;overflow:hidden;">Frame Wall/Partition</div>
</div>
<div class="sb" style="left:361px;top:190px;width:16px;height:93px;"></div>
<div class="th" style="left:363px;top:219px;width:14px;height:45px;"></div>
<svg class="a" style="left:361px;top:190px" width="17" height="93"><path d="M5.0 10.8l3.5-3.5l3.5 3.5M5.0 83l3.5 3.5l3.5-3.5" stroke="#555" stroke-width="1.9" fill="none"/></svg>
<div class="sunk" style="left:381px;top:188px;width:97px;height:97px;background:#ababab"></div>
<div class="a" style="left:383px;top:190px;width:93px;height:93px;overflow:hidden">
<div class="a" style="left:0;top:0;width:93px;height:19px;background:#f0f0f0;border:1px solid;border-color:#fff #a0a0a0 #a0a0a0 #fff"></div>
<div class="row" style="left:3.3px;top:3px">Stud Type</div>
<div class="a" style="left:0;top:19px;width:93px;height:19px;background:#fff;"></div>
<div class="row" style="left:3.3px;top:22px;">Metal</div>
<div class="a sel" style="left:0;top:38px;width:93px;height:19px;"></div>
<div class="row" style="left:3.3px;top:41px;color:#fff">Wood</div>
</div>
<div class="sunk" style="left:480px;top:188px;width:98px;height:97px;background:#fff"></div>
<div class="a" style="left:482px;top:190px;width:78px;height:93px;overflow:hidden">
<div class="a" style="left:0;top:0;width:78px;height:19px;background:#f0f0f0;border:1px solid;border-color:#fff #a0a0a0 #a0a0a0 #fff"></div>
<div class="row" style="left:3.3px;top:3px">Frame Ins</div>
<div class="a" style="left:0;top:19px;width:78px;height:19px;background:#fff;"></div>
<div class="row" style="left:3.3px;top:22px;">None</div>
<div class="a" style="left:0;top:38px;width:78px;height:19px;background:#fff;"></div>
<div class="row" style="left:3.3px;top:41px;">R-11</div>
<div class="a sel" style="left:0;top:57px;width:78px;height:19px;"></div>
<div class="row" style="left:3.3px;top:60px;color:#fff">R-13</div>
<div class="a" style="left:0;top:76px;width:78px;height:19px;background:#fff;"></div>
<div class="row" style="left:3.3px;top:79px;">R-15</div>
</div>
<div class="sb" style="left:560px;top:190px;width:16px;height:93px;"></div>
<div class="th" style="left:562px;top:207px;width:14px;height:33px;"></div>
<svg class="a" style="left:560px;top:190px" width="17" height="93"><path d="M5.0 10.8l3.5-3.5l3.5 3.5M5.0 83l3.5 3.5l3.5-3.5" stroke="#555" stroke-width="1.9" fill="none"/></svg>
<div class="sunk" style="left:580px;top:188px;width:97px;height:97px;background:#fff"></div>
<div class="a" style="left:582px;top:190px;width:77px;height:93px;overflow:hidden">
<div class="a" style="left:0;top:0;width:77px;height:19px;background:#f0f0f0;border:1px solid;border-color:#fff #a0a0a0 #a0a0a0 #fff"></div>
<div class="row" style="left:3.3px;top:3px">Brd Ins</div>
<div class="a sel" style="left:0;top:19px;width:77px;height:19px;"></div>
<div class="row" style="left:3.3px;top:22px;color:#fff">None</div>
<div class="a" style="left:0;top:38px;width:77px;height:19px;background:#fff;"></div>
<div class="row" style="left:3.3px;top:41px;">R-2</div>
<div class="a" style="left:0;top:57px;width:77px;height:19px;background:#fff;"></div>
<div class="row" style="left:3.3px;top:60px;">R-3</div>
<div class="a" style="left:0;top:76px;width:77px;height:19px;background:#fff;"></div>
<div class="row" style="left:3.3px;top:79px;">R-4</div>
</div>
<div class="sb" style="left:659px;top:190px;width:16px;height:93px;"></div>
<div class="th" style="left:661px;top:207px;width:14px;height:37px;"></div>
<svg class="a" style="left:659px;top:190px" width="17" height="93"><path d="M5.0 10.8l3.5-3.5l3.5 3.5M5.0 83l3.5 3.5l3.5-3.5" stroke="#555" stroke-width="1.9" fill="none"/></svg>
<div class="sunk" style="left:679px;top:188px;width:110px;height:97px;background:#ababab"></div>
<div class="a" style="left:681px;top:190px;width:106px;height:93px;overflow:hidden">
<div class="a" style="left:0;top:0;width:106px;height:19px;background:#f0f0f0;border:1px solid;border-color:#fff #a0a0a0 #a0a0a0 #fff"></div>
<div class="row" style="left:3.3px;top:3px">Ext Finish</div>
<div class="a" style="left:0;top:19px;width:106px;height:19px;background:#fff;"></div>
<div class="row" style="left:3.3px;top:22px;">Brick</div>
<div class="a sel" style="left:0;top:38px;width:106px;height:19px;"></div>
<div class="row" style="left:3.3px;top:41px;color:#fff">Siding or Stucco</div>
</div>
<div class="t" style="left:282px;top:291.5px;font-size:11px;transform:scaleX(0.9742);transform-origin:0 0;">12 C-0s w - Frame Wall/Partition, Cavity: R-13, Board: None, Exterior: Siding or Stucco, Depth: NA</div>
<div class="chk" style="left:347px;top:310px"></div>
<div class="t" style="left:365px;top:311px;font-size:11px;transform:scaleX(0.9745);transform-origin:0 0;">Wall is completely shaded.</div>
<div class="t" style="left:543px;top:312.7px;font-size:11.3px;font-weight:bold;transform:scaleX(0.9935);transform-origin:0 0;">Htg U-Value</div>
<div class="sunk" style="left:614px;top:308px;width:55px;height:18px;background:#80ffff"></div>
<div class="t" style="left:614px;top:315px;font-size:11px;width:55px;text-align:center;">0.091</div>
<div class="t" style="left:680px;top:312.7px;font-size:11.3px;font-weight:bold;transform:scaleX(0.9385);transform-origin:0 0;">Clg HTM</div>
<div class="sunk" style="left:732px;top:308px;width:56px;height:18px;background:#80ffff"></div>
<div class="t" style="left:732px;top:315px;font-size:11px;width:56px;text-align:center;">1.958</div>
<div class="gb" style="left:305px;top:340px;width:101px;height:89px;"></div>
<div class="gt" style="left:312px;top:334px;font-size:11.4px;width:69.0px;height:12px"><span style="position:absolute;left:2px;top:0;transform:scaleX(0.9300);transform-origin:0 0">Wall Direction</span></div>
<div class="cb" style="left:312px;top:349px;width:28px;height:23px;line-height:22.0px;background:#0ff;font-size:11px;"><span>NW</span></div>
<div class="cb" style="left:341px;top:349px;width:28px;height:23px;line-height:22.0px;background:#ff0;font-size:11px;"><span>N</span></div>
<div class="cb" style="left:369px;top:349px;width:28px;height:23px;line-height:22.0px;background:#0ff;font-size:11px;"><span>NE</span></div>
<div class="cb" style="left:312px;top:373px;width:28px;height:23px;line-height:22.0px;background:#0ff;font-size:11px;"><span>W</span></div>
<div class="cb" style="left:369px;top:373px;width:28px;height:23px;line-height:22.0px;background:#0ff;font-size:11px;"><span>E</span></div>
<div class="cb" style="left:312px;top:396px;width:28px;height:23px;line-height:22.0px;background:#0ff;font-size:11px;"><span>SW</span></div>
<div class="cb" style="left:341px;top:396px;width:28px;height:23px;line-height:22.0px;background:#0ff;font-size:11px;"><span>S</span></div>
<div class="cb" style="left:369px;top:396px;width:28px;height:23px;line-height:22.0px;background:#0ff;font-size:11px;"><span>SE</span></div>
<div class="gb" style="left:278px;top:440px;width:157px;height:118px;"></div>
<div class="gt" style="left:284px;top:434px;font-size:11.4px;width:65.3px;height:12px"><span style="position:absolute;left:2px;top:0;transform:scaleX(0.9186);transform-origin:0 0">Partition Wall</span></div>
<div class="chk" style="left:284px;top:453px"></div>
<div class="t" style="left:302.4px;top:446.7px;font-size:11.4px;transform:scaleX(0.9165);transform-origin:0 0;">This is a</div>
<div class="t" style="left:302.4px;top:460.5px;font-size:11.4px;transform:scaleX(0.9628);transform-origin:0 0;">partition wall</div>
<div class="cb" style="left:411px;top:443px;width:22px;height:24px;line-height:24px;background:#0ff;font-size:10.8px;"><span>?</span></div>
<div class="t" style="left:280.4px;top:480.3px;font-size:11.6px;color:#787878;transform:scaleX(0.8362);transform-origin:0 0;">STD</div>
<div class="sunk" style="left:308px;top:476px;width:45px;height:20px;"></div>
<div class="t" style="left:308px;top:482px;font-size:11.6px;color:#909090;width:28px;text-align:center;">0</div>
<div class="btn" style="left:334px;top:478px;width:17px;height:16px;border-left-color:#404040"></div>
<div class="t" style="left:358.2px;top:480.3px;font-size:11.6px;color:#787878;transform:scaleX(0.8633);transform-origin:0 0;">WTD</div>
<div class="sunk" style="left:387px;top:476px;width:45px;height:20px;"></div>
<div class="t" style="left:387px;top:482px;font-size:11.6px;color:#909090;width:28px;text-align:center;">0</div>
<div class="btn" style="left:413px;top:478px;width:17px;height:16px;border-left-color:#404040"></div>
<svg class="a" style="left:334px;top:478px" width="17" height="16"><path d="M6.5 6.5h4.4l-2.2 3.6z" fill="#f8f8f8" stroke="#808080" stroke-width="0.9"/></svg>
<svg class="a" style="left:413px;top:478px" width="17" height="16"><path d="M6.5 6.5h4.4l-2.2 3.6z" fill="#f8f8f8" stroke="#808080" stroke-width="0.9"/></svg>
<div class="t" style="left:303.2px;top:504px;font-size:11.6px;transform:scaleX(0.9287);transform-origin:0 0;">Calculated Scenerios</div>
<div class="chk dis" style="left:281px;top:522px"></div>
<div class="t" style="left:298.6px;top:521.5px;font-size:11.6px;color:#a0a0a0;transform:scaleX(0.8995);transform-origin:0 0;text-shadow:1px 1px 0 #fff;">Garage 1</div>
<div class="chk dis" style="left:354px;top:522px"></div>
<div class="t" style="left:371.8px;top:521.5px;font-size:11.6px;color:#a0a0a0;transform:scaleX(0.8883);transform-origin:0 0;text-shadow:1px 1px 0 #fff;">Sunroom 1</div>
<div class="chk dis" style="left:281px;top:540px"></div>
<div class="t" style="left:298.6px;top:539.5px;font-size:11.6px;color:#a0a0a0;transform:scaleX(0.8995);transform-origin:0 0;text-shadow:1px 1px 0 #fff;">Garage 2</div>
<div class="chk dis" style="left:354px;top:540px"></div>
<div class="t" style="left:371.8px;top:539.5px;font-size:11.6px;color:#a0a0a0;transform:scaleX(0.8883);transform-origin:0 0;text-shadow:1px 1px 0 #fff;">Sunroom 2</div>
<div class="gb" style="left:440px;top:340px;width:346px;height:219px;"></div>
<div class="gt" style="left:446px;top:334px;font-size:11.4px;width:82.2px;height:12px"><span style="position:absolute;left:2px;top:0;transform:scaleX(0.9258);transform-origin:0 0">Wall Dimensions</span></div>
<div class="cb" style="left:480px;top:347px;width:124px;height:21px;line-height:21px;background:#0ff;font-size:11.4px;"><span style="transform:scaleX(0.9451)">Add Block Load Walls</span></div>
<div class="t" style="left:528.9px;top:369.5px;font-size:11.6px;transform:scaleX(0.8678);transform-origin:0 0;">Wall</div>
<div class="t" style="left:518.8px;top:383.5px;font-size:11.6px;transform:scaleX(0.8879);transform-origin:0 0;">Length</div>
<div class="sunk" style="left:553px;top:372.5px;width:52px;height:19px;"></div>
<div class="t" style="left:553px;top:379px;font-size:11px;width:34px;text-align:center;">55</div>
<div class="btn" style="left:587px;top:374.5px;width:16px;height:15px;"></div>
<svg class="a" style="left:587px;top:374.5px" width="16" height="15"><path d="M5.2 5.2h6.4l-3.2 5.4z" fill="#000"/></svg>
<div class="t" style="left:447.5px;top:377.8px;font-size:11.6px;transform:scaleX(0.9394);transform-origin:0 0;">Average Wall</div>
<div class="t" style="left:466px;top:392px;font-size:11.6px;transform:scaleX(0.8947);transform-origin:0 0;">Height</div>
<div class="sunk" style="left:453px;top:406.5px;width:52px;height:19px;"></div>
<div class="t" style="left:453px;top:412.5px;font-size:11px;width:34px;text-align:center;">9</div>
<div class="btn" style="left:487px;top:408.5px;width:16px;height:15px;"></div>
<svg class="a" style="left:487px;top:408.5px" width="16" height="15"><path d="M5.2 5.2h6.4l-3.2 5.4z" fill="#000"/></svg>
<div class="cb" style="left:444px;top:430px;width:34px;height:20px;line-height:21.0px;background:#0ff;"><span>7</span></div>
<div class="cb" style="left:479px;top:430px;width:34px;height:20px;line-height:21.0px;background:#0ff;"><span>12</span></div>
<div class="cb" style="left:444px;top:451px;width:34px;height:20px;line-height:21.0px;background:#0ff;"><span>8</span></div>
<div class="cb" style="left:479px;top:451px;width:34px;height:20px;line-height:21.0px;background:#0ff;"><span>13</span></div>
<div class="cb" style="left:444px;top:471px;width:34px;height:20px;line-height:21.0px;background:#0ff;"><span>9</span></div>
<div class="cb" style="left:479px;top:471px;width:34px;height:20px;line-height:21.0px;background:#0ff;"><span>14</span></div>
<div class="cb" style="left:444px;top:492px;width:34px;height:20px;line-height:21.0px;background:#0ff;"><span>10</span></div>
<div class="cb" style="left:479px;top:492px;width:34px;height:20px;line-height:21.0px;background:#0ff;"><span>15</span></div>
<div class="cb" style="left:444px;top:512px;width:34px;height:20px;line-height:21.0px;background:#0ff;"><span>11</span></div>
<div class="cb" style="left:479px;top:512px;width:34px;height:20px;line-height:21.0px;background:#0ff;"><span>16</span></div>
<div class="cb" style="left:446px;top:535px;width:66px;height:20px;line-height:21.0px;background:#ff0;font-size:11.4px;"><span>Cust.</span></div>
<div class="cb" style="left:609px;top:362px;width:34px;height:20px;line-height:21.0px;background:#0ff;"><span>8</span></div>
<div class="cb" style="left:609px;top:383px;width:34px;height:20px;line-height:21.0px;background:#0ff;"><span>14</span></div>
<div class="cb" style="left:644px;top:362px;width:34px;height:20px;line-height:21.0px;background:#0ff;"><span>9</span></div>
<div class="cb" style="left:644px;top:383px;width:34px;height:20px;line-height:21.0px;background:#0ff;"><span>16</span></div>
<div class="cb" style="left:679px;top:362px;width:34px;height:20px;line-height:21.0px;background:#0ff;"><span>10</span></div>
<div class="cb" style="left:679px;top:383px;width:34px;height:20px;line-height:21.0px;background:#0ff;"><span>18</span></div>
<div class="cb" style="left:715px;top:362px;width:34px;height:20px;line-height:21.0px;background:#0ff;"><span>11</span></div>
<div class="cb" style="left:715px;top:383px;width:34px;height:20px;line-height:21.0px;background:#0ff;"><span>35</span></div>
<div class="cb" style="left:750px;top:362px;width:34px;height:20px;line-height:21.0px;background:#0ff;"><span>12</span></div>
<div class="cb" style="left:750px;top:383px;width:34px;height:20px;line-height:21.0px;background:#0ff;"><span>55</span></div>
<div class="a" style="left:518px;top:408px;width:264px;height:148px;border:4px solid #000"></div>
<div class="t" style="left:602.3px;top:435px;font-size:11.6px;transform:scaleX(0.9280);transform-origin:0 0;">Gross Square Footage</div>
<div class="t" style="left:615.3px;top:459px;font-size:11.6px;transform:scaleX(0.9181);transform-origin:0 0;">Net Square Footage</div>
<div class="sunk" style="left:721px;top:431px;width:52px;height:20px;"></div>
<div class="t" style="left:721px;top:437px;font-size:11.6px;width:52px;text-align:center;">495</div>
<div class="sunk" style="left:721px;top:455px;width:52px;height:20px;"></div>
<div class="t" style="left:721px;top:461px;font-size:11.6px;width:52px;text-align:center;">450</div>
<div class="t" style="left:590px;top:499px;font-size:11.6px;transform:scaleX(0.9390);transform-origin:0 0;">Net square footage is calculated</div>
<div class="t" style="left:580.7px;top:513px;font-size:11.6px;transform:scaleX(0.9590);transform-origin:0 0;">based on windows and doors added</div>
<div class="t" style="left:634.2px;top:527px;font-size:11.6px;transform:scaleX(0.9230);transform-origin:0 0;">to the program.</div>
</body></html>
